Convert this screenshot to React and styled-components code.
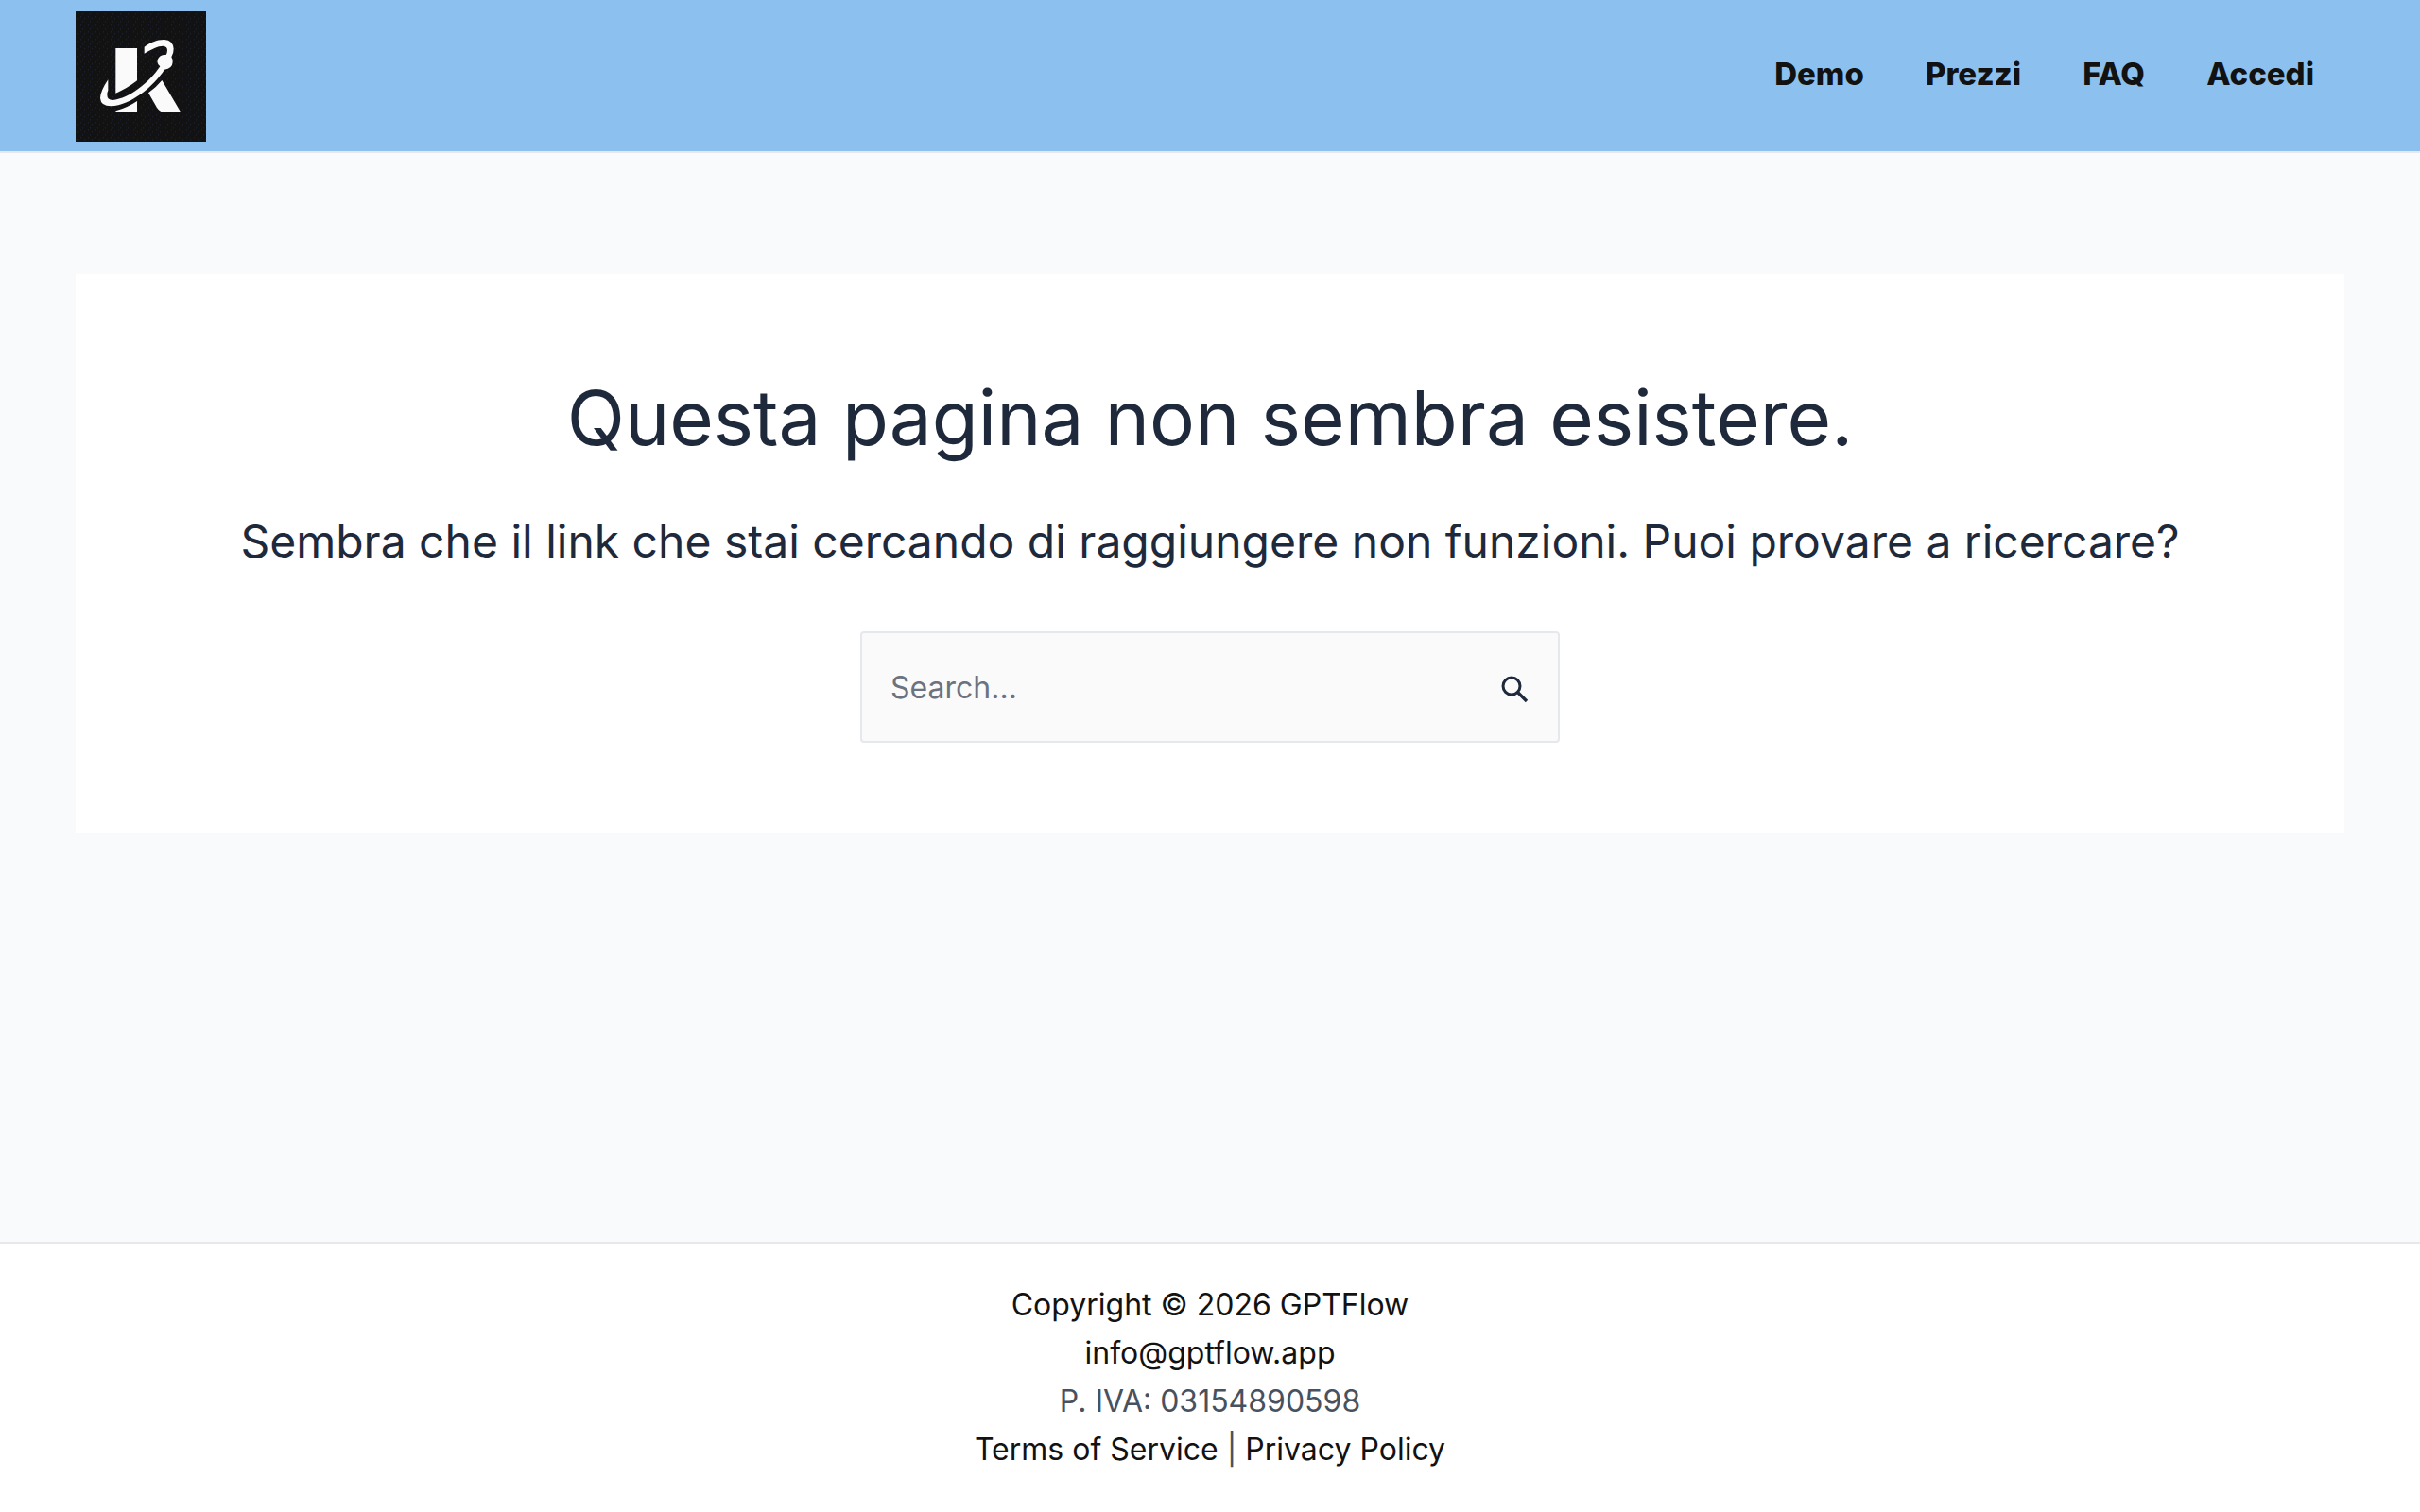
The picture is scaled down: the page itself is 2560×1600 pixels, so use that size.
import React, { useState } from 'react';
import styled, { createGlobalStyle } from 'styled-components';

const navItems = [
    { label: 'Demo', href: '#demo' },
    { label: 'Prezzi', href: '#prezzi' },
    { label: 'FAQ', href: '#faq' },
    { label: 'Accedi', href: '#accedi' },
];

const Logo = () => (
    <LogoSvg viewBox="60 36 414 414" role="img" aria-label="GPTFlow">
        <defs>
            <pattern id="dots" width="24" height="24" patternUnits="userSpaceOnUse">
                <rect x="3" y="4" width="3" height="3" fill="#1c2340" />
                <rect x="15" y="10" width="3" height="3" fill="#1c2340" />
                <rect x="9" y="19" width="3" height="3" fill="#1c2340" />
            </pattern>
        </defs>
        <rect x="60" y="36" width="414" height="414" fill="#121212" />
        <rect x="60" y="36" width="414" height="414" fill="url(#dots)" />
        <g fill="#fafafa">
            <path d="M187 153H255V256Q222 282 187 296Z" />
            <path d="M187 357V352Q224 342 255 321V357Z" />
            <path d="M334 255L394 357H345Q328 357 318 342L291 295Q315 278 334 255Z" />
            <path d="M163 253Q138 290 138 312Q140 337 172 337C235 334 306 275 342 221Q367 217 368 197Q368 187 364 181Q371 169 371 155Q369 128 342 126C319 125 298 135 278 149V170C302 156 321 146 337 146Q351 147 351 160Q351 168 347 174Q326 173 320 190Q317 202 328 211C295 260 232 313 177 318Q160 318 160 301Q160 292 163 287Z" />
        </g>
    </LogoSvg>
);

const App = () => {
    const [query, setQuery] = useState('');

    return (
        <Page>
            <GlobalStyle />
            <Header>
                <LogoLink href="#home">
                    <Logo />
                </LogoLink>
                <Nav>
                    {navItems.map((item) => (
                        <NavLink key={item.label} href={item.href}>{item.label}</NavLink>
                    ))}
                </Nav>
            </Header>
            <Main>
                <Card>
                    <Title>Questa pagina non sembra esistere.</Title>
                    <Subtitle>
                        Sembra che il link che stai cercando di raggiungere non funzioni. Puoi provare a ricercare?
                    </Subtitle>
                    <SearchForm role="search" onSubmit={(e) => e.preventDefault()}>
                        <SearchInput
                            type="search"
                            aria-label="Search"
                            placeholder="Search..."
                            value={query}
                            onChange={(e) => setQuery(e.target.value)}
                        />
                        <SearchButton type="submit" aria-label="Search">
                            <svg width="30" height="30" viewBox="0 0 30 30" fill="none" stroke="currentColor">
                                <circle cx="11" cy="11" r="9" strokeWidth="3" />
                                <path d="M17.5 17.5L27 27" strokeWidth="3.4" />
                            </svg>
                        </SearchButton>
                    </SearchForm>
                </Card>
            </Main>
            <Footer>
                <FooterLine>
                    <FooterLink href="#home">Copyright © 2026 GPTFlow</FooterLink>
                </FooterLine>
                <FooterLine>
                    <FooterLink href="mailto:info@gptflow.app">info@gptflow.app</FooterLink>
                </FooterLine>
                <FooterLine>P. IVA: 03154890598</FooterLine>
                <FooterLine>
                    <FooterLink href="#terms">Terms of Service</FooterLink>
                    {' | '}
                    <FooterLink href="#privacy">Privacy Policy</FooterLink>
                </FooterLine>
            </Footer>
        </Page>
    );
};

export default App;

const GlobalStyle = createGlobalStyle`
  * {
    box-sizing: border-box;
  }

  body {
    margin: 0;
    background: #f9fafc;
    color: #475160;
    font-family: 'Inter', sans-serif;
    font-size: 32px;
    line-height: 51px;
  }
`;

const Page = styled.div`
  display: flex;
  flex-direction: column;
  min-height: 100vh;
`;

const Header = styled.header`
  display: flex;
  align-items: center;
  justify-content: space-between;
  padding: 12px 80px 10px;
  background: #8cc1ef;
  border-bottom: 2px solid #e6e8ec;
`;

const LogoLink = styled.a`
  display: block;
`;

const LogoSvg = styled.svg`
  display: block;
  width: 138px;
  height: 138px;
`;

const Nav = styled.nav`
  display: flex;
  gap: 65px;
  padding: 0 32px 6px 0;
`;

const NavLink = styled.a`
  color: #121212;
  font-size: 33px;
  font-weight: 800;
  text-decoration: none;
`;

const Main = styled.main`
  flex: 1;
  padding: 128px 80px;
`;

const Card = styled.section`
  display: flex;
  flex-direction: column;
  align-items: center;
  padding: 96px;
  background: #ffffff;
  color: #1e293b;
  text-align: center;
`;

const Title = styled.h1`
  margin: 0 0 34px;
  font-size: 80px;
  font-weight: 400;
  line-height: 112px;
`;

const Subtitle = styled.p`
  margin: 0 0 54px;
  font-size: 48px;
  line-height: 82px;
`;

const SearchForm = styled.form`
  display: flex;
  width: 740px;
  max-width: 100%;
  height: 118px;
  background: #fafafa;
  border: 2px solid #e5e8ec;
  border-radius: 4px;
`;

const SearchInput = styled.input`
  flex: 1;
  min-width: 0;
  padding: 0 30px;
  border: 0;
  outline: 0;
  background: transparent;
  color: #1e293b;
  font: inherit;
  appearance: none;

  &::placeholder {
    color: #6b7280;
    opacity: 1;
  }
`;

const SearchButton = styled.button`
  display: flex;
  align-items: center;
  justify-content: center;
  width: 90px;
  padding: 6px 0 0;
  border: 0;
  background: transparent;
  color: #1e293b;
  cursor: pointer;
`;

const Footer = styled.footer`
  padding: 39px 80px 41px;
  background: #ffffff;
  border-top: 2px solid #e6e8ec;
  text-align: center;
`;

const FooterLine = styled.p`
  margin: 0;
`;

const FooterLink = styled.a`
  color: #121212;
  text-decoration: none;
`;
